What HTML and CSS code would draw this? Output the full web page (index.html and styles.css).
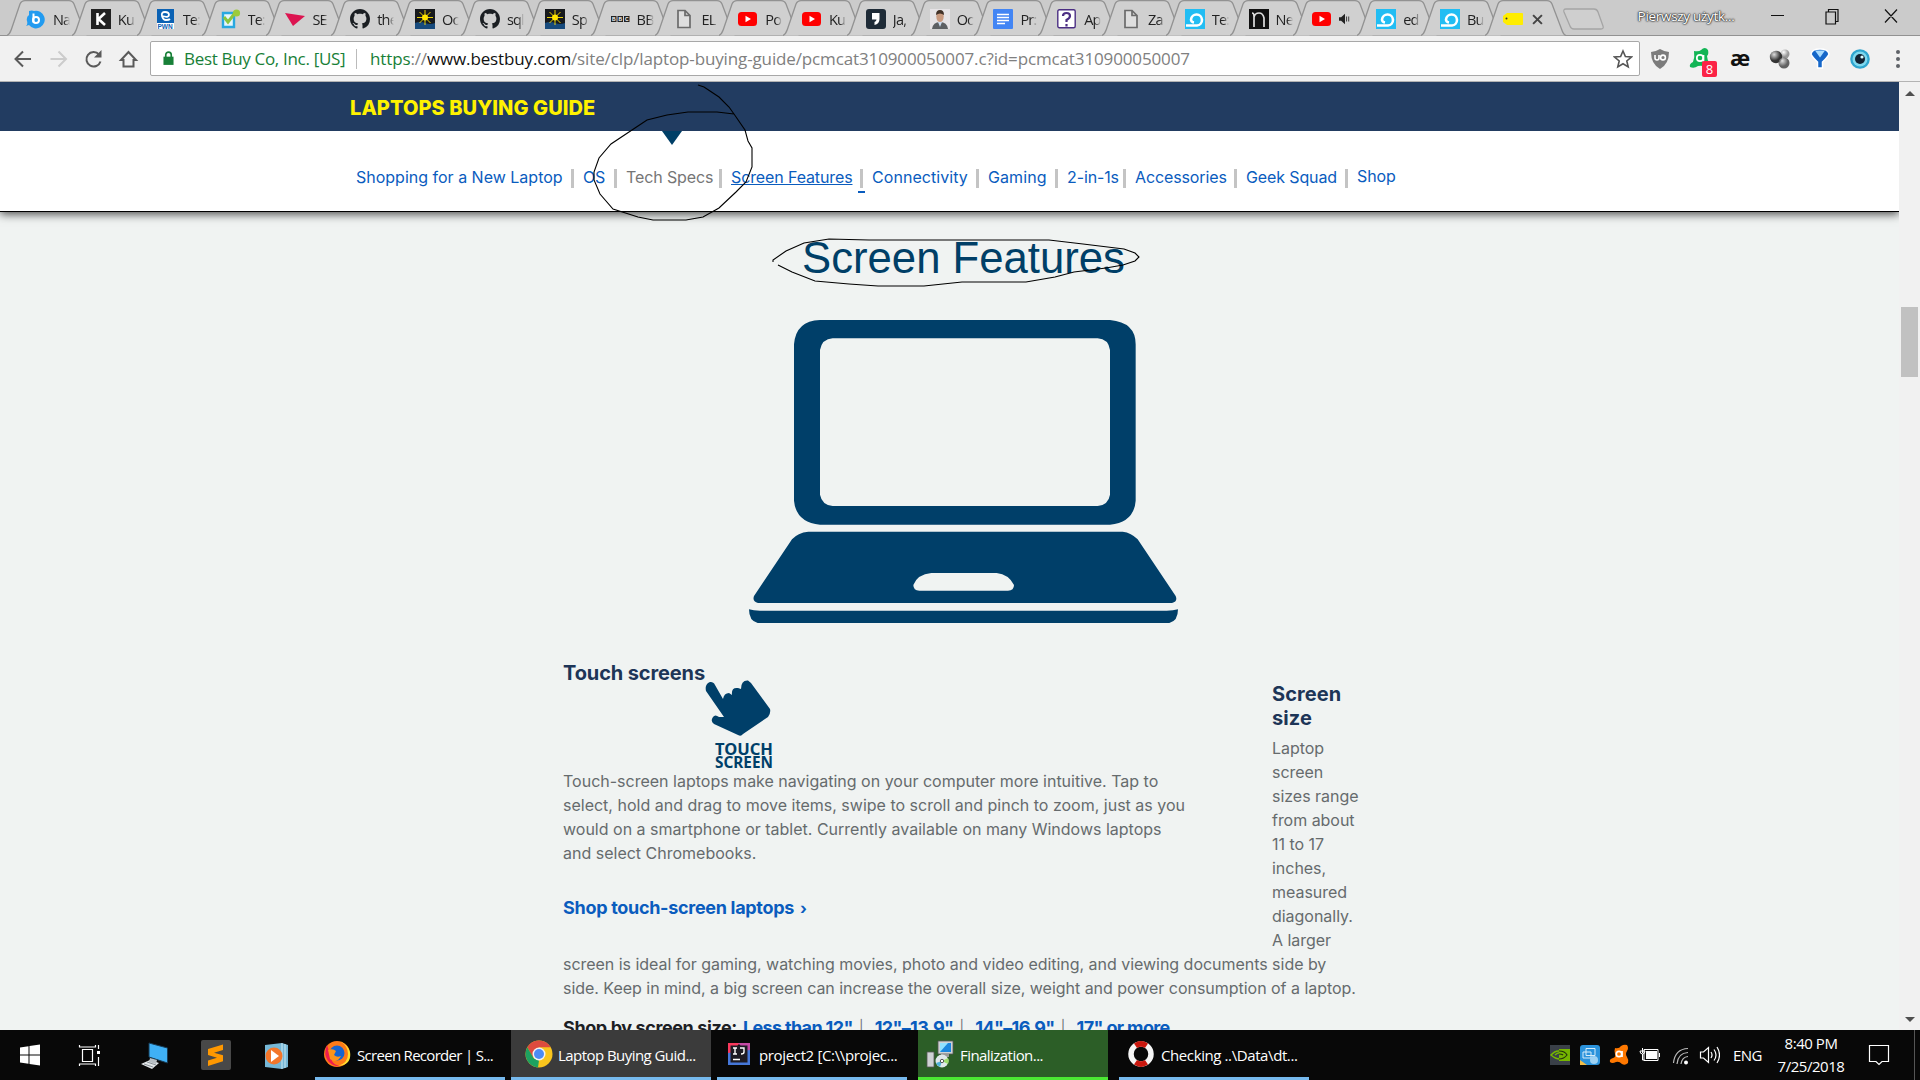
FILE: index.html
```html
<!DOCTYPE html>
<html lang="en">
<head>
<meta charset="utf-8">
<title>Laptop Buying Guide</title>
<link rel="stylesheet" href="styles.css">
</head>
<body>
<svg class="defs" width="0" height="0">
  <defs>
    <symbol id="tab" viewBox="0 0 81 36"><path class="tab-shape" d="M0 35.5C3 34 3.500 32 4.500 29L13 4Q14.500 .7 18 .7H62Q65.500 .7 67 4L76.500 29C77.500 32 78.500 35 81 35.500"/></symbol>
    <symbol id="file" viewBox="0 0 20 20"><path d="M4 1.500h7l5 5v12H4zM11 1.500v5h5" fill="#dedede" stroke="#6b6b6b" stroke-width="1.700"/></symbol>
    <symbol id="youtube" viewBox="0 0 20 20"><rect x="0" y="3" width="19" height="14" rx="3.500" fill="#f00"/><path d="M7.500 6.800v6.400l5.500-3.200z" fill="#fff"/></symbol>
    <symbol id="github" viewBox="0 0 20 20"><path fill="#1b1f23" fill-rule="evenodd" transform="scale(1.25)" d="M8 0C3.580 0 0 3.580 0 8c0 3.540 2.290 6.530 5.470 7.590.4.070.55-.17.55-.38 0-.19-.01-.82-.01-1.490-2.010.37-2.530-.49-2.690-.94-.09-.23-.48-.94-.82-1.130-.28-.15-.68-.52-.01-.53.63-.01 1.080.58 1.230.82.72 1.210 1.870.87 2.330.66.070-.52.28-.87.51-1.070-1.780-.2-3.640-.89-3.640-3.950 0-.87.31-1.590.82-2.150-.08-.2-.36-1.020.08-2.120 0 0 .67-.21 2.200.82.64-.18 1.320-.27 2-.27s1.360.09 2 .27c1.530-1.040 2.200-.82 2.200-.82.44 1.100.16 1.920.08 2.120.51.56.82 1.270.82 2.150 0 3.070-1.870 3.750-3.650 3.950.29.25.54.73.54 1.480 0 1.070-.01 1.930-.01 2.200 0 .21.15.46.55.38A8.010 8.010 0 0 0 16 8c0-4.420-3.580-8-8-8z"/></symbol>
    <symbol id="sun" viewBox="0 0 20 20"><path fill="#16191c" d="M0 0h20v20H0z"/><path fill="#174a7c" d="M0 14q5-2 10 0t10 0v6H0z"/><path stroke="#ffe400" stroke-width=".9" d="M10 1v15M2 8.500h16M4.500 3l11 11M15.500 3l-11 11"/><circle cx="10" cy="8.500" r="3" fill="#ffe400"/></symbol>
    <symbol id="loop" viewBox="0 0 20 20"><path fill="#22bdf3" d="M0 0h20v20H0z"/><path d="M1 16.500h11a5.500 5.500 0 1 0-6-6q0 2.500 3 3" fill="none" stroke="#fff" stroke-width="2.600"/></symbol>
  </defs>
</svg>

<header class="browser">
  <div class="tabstrip">
    <div class="tab"><svg class="shape"><use href="#tab"/></svg><svg class="fav" viewBox="0 0 20 20"><path d="M3 2q3-1 5 0a8.800 8.800 0 1 1-5 14l-3 1q2-2 1-5Q0 8 3 6z" fill="#229bf0"/><path d="M7.500 4.500v9" stroke="#fff" stroke-width="2"/><circle cx="10" cy="11" r="3" fill="none" stroke="#fff" stroke-width="2"/></svg><span class="tt">Na</span></div>
    <div class="tab"><svg class="shape"><use href="#tab"/></svg><svg class="fav" viewBox="0 0 20 20"><path fill="#222" d="M0 0h20v20H0z"/><path d="M6.500 4v12M14 4l-6.500 6 6.500 6" fill="none" stroke="#fff" stroke-width="2.600"/></svg><span class="tt">Ku</span></div>
    <div class="tab"><svg class="shape"><use href="#tab"/></svg><svg class="fav" viewBox="0 0 20 20"><path fill="#0b62b4" d="M1 0h17v14H1z"/><path fill="#fff" d="M1 14h17v6H1z"/><path d="M6 7q7 2 7-1T9 3 6 7t4 4 4-1" fill="none" stroke="#fff" stroke-width="1.800"/><text x="1.500" y="19.600" class="fav-pwn">PWN</text></svg><span class="tt">Te:</span></div>
    <div class="tab"><svg class="shape"><use href="#tab"/></svg><svg class="fav" viewBox="0 0 20 20"><path d="M2 4h11v14H2z" fill="#e5f6fd" stroke="#28a8e0" stroke-width="2.400"/><path d="m3 8 4 5 7-9" fill="none" stroke="#8bc53f" stroke-width="3"/><circle cx="15.500" cy="4" r="3.600" fill="#9ccb3b"/></svg><span class="tt">Te:</span></div>
    <div class="tab"><svg class="shape"><use href="#tab"/></svg><svg class="fav" viewBox="0 0 20 20"><path d="m0 4 20 3L8 17z" fill="#dc1450"/></svg><span class="tt">SE</span></div>
    <div class="tab"><svg class="shape"><use href="#tab"/></svg><svg class="fav"><use href="#github"/></svg><span class="tt">the</span></div>
    <div class="tab"><svg class="shape"><use href="#tab"/></svg><svg class="fav"><use href="#sun"/></svg><span class="tt">Oc</span></div>
    <div class="tab"><svg class="shape"><use href="#tab"/></svg><svg class="fav"><use href="#github"/></svg><span class="tt">sql</span></div>
    <div class="tab"><svg class="shape"><use href="#tab"/></svg><svg class="fav"><use href="#sun"/></svg><span class="tt">Sp</span></div>
    <div class="tab"><svg class="shape"><use href="#tab"/></svg><svg class="fav" viewBox="0 0 20 20"><path fill="#222" d="M1 7h5.500v6H1zM7.500 7H13v6H7.500zM14 7h5.500v6H14z"/><text x="2" y="12" class="fav-bbc">B</text><text x="8.500" y="12" class="fav-bbc">B</text><text x="15" y="12" class="fav-bbc">C</text></svg><span class="tt">BB</span></div>
    <div class="tab slim"><svg class="shape"><use href="#tab"/></svg><svg class="fav"><use href="#file"/></svg><span class="tt">EL</span></div>
    <div class="tab slim"><svg class="shape"><use href="#tab"/></svg><svg class="fav"><use href="#youtube"/></svg><span class="tt">Po</span></div>
    <div class="tab slim"><svg class="shape"><use href="#tab"/></svg><svg class="fav"><use href="#youtube"/></svg><span class="tt">Ku</span></div>
    <div class="tab slim"><svg class="shape"><use href="#tab"/></svg><svg class="fav" viewBox="0 0 20 20"><rect width="20" height="20" rx="3" fill="#1e2b37"/><path d="M6 4h7.500v6q0 5-5 6v-3q2-.7 2-2.500H6z" fill="#fff"/></svg><span class="tt">Ja,</span></div>
    <div class="tab slim"><svg class="shape"><use href="#tab"/></svg><svg class="fav" viewBox="0 0 20 20"><path fill="#e6e3e6" d="M0 0h20v20H0z"/><path fill="#5d6064" d="M2 20q1-7 8-7t8 7z"/><ellipse cx="10" cy="7.500" rx="3.700" ry="5.500" fill="#c99a80"/><path d="M6 6q0-5 4-5t4 5q-4-3-8 0" fill="#423128"/><path d="m8 13 2 5 2-5z" fill="#cddcf0"/></svg><span class="tt">Oc</span></div>
    <div class="tab slim"><svg class="shape"><use href="#tab"/></svg><svg class="fav" viewBox="0 0 20 20"><rect width="20" height="20" rx="1" fill="#4285f4"/><path d="M4 5.500h12M4 8.500h12M4 11.500h12M4 14.500h8" stroke="#fff" stroke-width="1.500"/></svg><span class="tt">Pr:</span></div>
    <div class="tab slim"><svg class="shape"><use href="#tab"/></svg><svg class="fav" viewBox="0 0 20 20"><rect x=".8" y=".8" width="17.400" height="18" rx="1.500" fill="#fff" stroke="#4b2e83" stroke-width="1.400"/><path d="M6 7q0-3 3.500-3T13 7q0 2-3.500 4v2M9.500 15v2.500" fill="none" stroke="#4b2e83" stroke-width="2.200"/></svg><span class="tt">Ap</span></div>
    <div class="tab slim"><svg class="shape"><use href="#tab"/></svg><svg class="fav"><use href="#file"/></svg><span class="tt">Za</span></div>
    <div class="tab slim"><svg class="shape"><use href="#tab"/></svg><svg class="fav"><use href="#loop"/></svg><span class="tt">Te:</span></div>
    <div class="tab slim"><svg class="shape"><use href="#tab"/></svg><svg class="fav" viewBox="0 0 20 20"><path fill="#111" d="M0 0h20v20H0z"/><path d="M3 4q2 0 2 3v11M5 8q1-4 5-4t5 5v9" fill="none" stroke="#ddd" stroke-width="1.700"/></svg><span class="tt">Ne</span></div>
    <div class="tab slim"><svg class="shape"><use href="#tab"/></svg><svg class="fav"><use href="#youtube"/></svg><svg class="speaker" viewBox="0 0 14 14"><path d="M0 5h2.500L7 1v12L2.500 9H0z" fill="#222"/><path d="M8.800 4v6M11.300 4v6" stroke="#444" stroke-width="1.200"/></svg></div>
    <div class="tab slim"><svg class="shape"><use href="#tab"/></svg><svg class="fav"><use href="#loop"/></svg><span class="tt">ed</span></div>
    <div class="tab slim"><svg class="shape"><use href="#tab"/></svg><svg class="fav"><use href="#loop"/></svg><span class="tt">Bu</span></div>
    <div class="tab slim active"><svg class="shape"><use href="#tab"/></svg><svg class="fav" viewBox="0 0 20 20"><path d="M4 4h15q1 0 1 1v10q0 1-1 1H4l-4-3V7z" fill="#ffed00"/><circle cx="3.500" cy="9.500" r="1" fill="#333"/></svg><svg class="close-tab" viewBox="0 0 10 10"><path d="m1 1 8 8M9 1 1 9" stroke="#444" stroke-width="1.800"/></svg></div>
    <svg class="newtab" viewBox="0 0 44 22"><path d="M4 1h28q3 0 4 3l5 14q1 3-2 3H12q-3 0-4-3L2 4Q1 1 4 1z" fill="#cfcfcf" stroke="#a5a5a5" stroke-width="1.300"/></svg>
    <span class="profile">Pierwszy użytk...</span>
    <svg class="winbtns" viewBox="0 0 130 20"><path d="M1 9.500h13M56 6h9.500v12H56zM58.500 6V3.500H68v12h-2.500M115 3.500l12 13M127 3.500l-12 13" fill="none" stroke="#111" stroke-width="1.200"/></svg>
  </div>
  <div class="toolbar">
    <svg class="navicons" viewBox="0 0 136 24"><g fill="none" stroke="#5a5a5a" stroke-width="2"><path d="M24 12H9M16 4.500 8.500 12l7.500 7.500"/><path stroke="#ccc" d="M43.500 12h15M51.500 4.500 59 12l-7.500 7.500"/><path d="M92 7.500a7.200 7.200 0 1 0 1.500 7"/><path d="M114 13l7.500-8 7.500 8h-2.500v6.500h-10V13z"/></g><path d="M94.500 3v7.500H87z" fill="#5a5a5a"/></svg>
    <div class="omnibox">
      <svg class="lock" viewBox="0 0 12 16"><path d="M.5 6h11v9H.5z" fill="#188038"/><path d="M3 7V4a3 3 0 0 1 6 0v3" fill="none" stroke="#188038" stroke-width="1.800"/></svg>
      <span class="cert">Best Buy Co, Inc. [US]</span>
      <span class="url"><i>https</i>://<b>www.bestbuy.com</b>/site/clp/laptop-buying-guide/pcmcat310900050007.c?id=pcmcat310900050007</span>
      <svg class="star" viewBox="0 0 20 20"><path d="m10 2 2.400 5.500 6 .5-4.600 4 1.400 5.900-5.200-3.100-5.200 3.100L6.200 12 1.600 8l6-.5z" fill="none" stroke="#555" stroke-width="1.600"/></svg>
    </div>
    <svg class="exts" viewBox="0 0 270 36">
      <defs><radialGradient id="ball" cx=".35" cy=".3"><stop stop-color="#ddd"/><stop offset="1" stop-color="#333"/></radialGradient><radialGradient id="ball2" cx=".35" cy=".3"><stop stop-color="#fff"/><stop offset="1" stop-color="#999"/></radialGradient></defs>
      <path d="M20 8q5 3 9 3 0 12-9 17-9-5-9-17 4 0 9-3z" fill="#7c7c7c"/><path d="M15 14v3q0 2 2 2t2-2v-3" fill="none" stroke="#fff" stroke-width="1.600"/><circle cx="23" cy="16.500" r="2.400" fill="none" stroke="#fff" stroke-width="1.600"/>
      <path d="M54 10q5 1 7-1 4-4 7 0 1 4-1 6 0 4 3 8l-4 3q-4-2-8-1-4 3-8 1-1-3 3-5 2-5 1-11z" fill="#12b555"/><circle cx="60" cy="17" r="3.200" fill="none" stroke="#fff" stroke-width="1.700"/><path d="M63.500 14v7" stroke="#fff" stroke-width="1.700"/>
      <rect x="62" y="20" width="15" height="16" rx="2" fill="#fb2346"/><text x="65.700" y="33" class="badge8">8</text>
      <text x="90" y="25" class="ae">æ</text>
      <circle cx="145" cy="13" r="4.500" fill="url(#ball2)"/><circle cx="136" cy="16" r="6.200" fill="url(#ball)"/><circle cx="144" cy="22" r="5.500" fill="url(#ball)" opacity=".75"/>
      <path d="M171 13q1-5 9-5t9 5q-1 3-6.500 8v6h-5v-6q-5.500-5-6.500-8z" fill="#1667c9" stroke="#fff" stroke-width="1.500"/><path d="m175 9.500 5 7 5-7z" fill="#a9dcff"/>
      <circle cx="220" cy="18" r="9.800" fill="#2ea5cf"/><circle cx="220" cy="18" r="7.500" fill="#7fd8ee"/><circle cx="220" cy="18" r="5" fill="#123"/><circle cx="222" cy="16" r="1.600" fill="#dff"/>
      <g fill="#5f6368"><circle cx="258" cy="11" r="2"/><circle cx="258" cy="18" r="2"/><circle cx="258" cy="25" r="2"/></g>
    </svg>
  </div>
</header>

<div class="viewport">
  <div class="page">
    <div class="banner"><span>LAPTOPS BUYING GUIDE</span></div>
    <nav class="guide-nav">
      <a class="n1">Shopping for a New Laptop</a><a class="n2">OS</a><a class="n3 muted">Tech Specs</a><a class="n4 current">Screen Features</a><a class="n5">Connectivity</a><a class="n6">Gaming</a><a class="n7">2-in-1s</a><a class="n8">Accessories</a><a class="n9">Geek Squad</a><a class="n10">Shop</a>
    </nav>
    <main>
      <h1>Screen Features</h1>
      <svg class="laptop" viewBox="0 0 1440 1020"><g fill="#003f69">
        <path fill-rule="evenodd" d="M300 60H1170Q1247 67 1247 133V602Q1242 667 1170 674H300Q228 667 222 602V133Q228 62 300 60zM338 115Q306 117 300 150V584Q306 615 338 618H1133Q1165 615 1170 584V150Q1165 117 1133 115z"/>
        <path fill-rule="evenodd" d="M265 695H1208Q1234 698 1253 718L1367 888Q1374 904 1356 909H114Q96 904 102 888L216 718Q233 698 265 695zM634 819Q592 823 580 855Q580 872 598 872H864Q882 872 882 855Q866 823 830 819z"/>
        <path d="M87 928Q100 932 120 932H1340Q1360 932 1374 928Q1374 963 1348 969H113Q87 963 87 928z"/></g></svg>
      <div class="columns">
        <section class="touch">
          <div class="touch-head">
            <h2>Touch screens</h2>
            <svg class="hand" viewBox="0 0 70 90"><path d="M1 11C-1 3 7 -1 10 5L18 19Q19 13 24 13L27 15Q26 7 33 8L36 9Q36 0 43 .5L46 3 65 29Q66 33 63 37L38 54Q36 57 33 55L9 44Q5 41 8 37 10 34 14 37L19 37z" fill="#003f69"/><text x="10" y="74.500" textLength="58" lengthAdjust="spacingAndGlyphs">TOUCH</text><text x="10" y="88" textLength="58" lengthAdjust="spacingAndGlyphs">SCREEN</text></svg>
          </div>
          <p>Touch-screen laptops make navigating on your computer more intuitive. Tap to<br>select, hold and drag to move items, swipe to scroll and pinch to zoom, just as you<br>would on a smartphone or tablet. Currently available on many Windows laptops<br>and select Chromebooks.</p>
          <a class="shop">Shop touch-screen laptops <small>›</small></a>
        </section>
        <section class="size">
          <h2>Screen<br>size</h2>
          <p>Laptop<br>screen<br>sizes range<br>from about<br>11 to 17<br>inches,<br>measured<br>diagonally.<br>A larger</p>
        </section>
      </div>
      <p class="wide">screen is ideal for gaming, watching movies, photo and video editing, and viewing documents side by<br>side. Keep in mind, a big screen can increase the overall size, weight and power consumption of a laptop.</p>
      <div class="sizes"><strong>Shop by screen size:</strong><a>Less than 12"</a><i>|</i><a>12"–13.9"</a><i>|</i><a>14"–16.9"</a><i>|</i><a>17" or more</a></div>
    </main>
  </div>
  <div class="scrollbar"><svg viewBox="0 0 10 5"><path d="M0 5 5 0l5 5z"/></svg><div class="thumb"></div><svg class="down" viewBox="0 0 10 5"><path d="M0 0h10L5 5z"/></svg></div>
</div>

<footer class="taskbar">
  <svg class="pinned" viewBox="0 0 300 50">
    <path fill="#fff" d="M20 17.500l8.500-1.300v8.300H20zM29.500 16 40 14.500v10H29.500zM20 25.500h8.500v8.300L20 32.500zM29.500 25.500H40v10L29.500 34z"/>
    <path d="M82.500 19.500h10v12h-10zM79.500 15v2h16v-2M79.500 36v-2h16v2M98.500 15v4M98.500 27v9" fill="none" stroke="#fff" stroke-width="1.200"/><path fill="#fff" d="M97 21h3v3h-3z"/>
    <path d="m149 13 18.500 5v15L149 27z" fill="#3fb0f5" stroke="#173b55"/><path d="m141 34 9-4 9 3-7 6z" fill="#e2e6e8"/><path d="m150 28 7 2-1 4-7-2z" fill="#b9c0c4"/><path d="m144 34 9 3M147 32l9 3" stroke="#8a9298"/>
    <rect x="201" y="10" width="30" height="30" rx="2" fill="#484848"/><path d="m208 19 15-4.500v5.500l-9 2.800 9 2.500v6L208 36v-5.500l9-2.700-9-2.800z" fill="#ff9800"/>
    <path d="m265 15 17-2 6 2v22l-6 2-17-2z" fill="#75b7d6"/><path d="M282 13v26M285 14v24" stroke="#cce8f3"/><circle cx="274" cy="26" r="8.500" fill="#f3762a"/><path d="M271 20v12l8-6z" fill="#fff"/>
  </svg>
  <div class="task t1"><svg viewBox="0 0 28 28"><circle cx="14" cy="14" r="13" fill="#ff7a18"/><path d="M4 5Q0 14 5 21q5 6 12 5-6-1-8-5z" fill="#ee1c4e"/><path d="M17 1q8 5 8 13 0 9-10 12 14-1 12-14-2-7-10-11z" fill="#ffdf30"/><circle cx="14" cy="13" r="7.500" fill="#1764d0"/><path d="M5 10q5-2 8 1l-2 4q3 3 7 1-4 8-11 3z" fill="#ff9418"/></svg><span>Screen Recorder | S...</span></div>
  <div class="task t2 on"><svg viewBox="0 0 28 28"><circle cx="14" cy="14" r="13.500" fill="#f9c51d"/><path d="M2.300 7.300A13.500 13.500 0 0 1 25.700 7.300H14L8 17.500z" fill="#dd4b3e"/><path d="M2.300 7.300 8.500 18 14 20.500 13 27.500A13.500 13.500 0 0 1 2.300 7.300z" fill="#1da160"/><circle cx="14" cy="14" r="6.500" fill="#f3f3f3"/><circle cx="14" cy="14" r="5" fill="#4c8bf5"/></svg><span>Laptop Buying Guid...</span></div>
  <div class="task t3"><svg viewBox="0 0 28 28"><path d="M3 3h12L3 16z" fill="#f9385c"/><path d="M13 3h12v13z" fill="#c64aa5"/><path d="M3 13v12h22V10z" fill="#4577d9"/><path fill="#1d1b24" d="M5.500 5.500h17v17h-17z"/><path d="M8 8h4M10 8v6M8 14h4M15 8h4v4q0 2-3 2" fill="none" stroke="#fff" stroke-width="1.400"/><path d="M8 19.500h7" stroke="#fff" stroke-width="1.500"/></svg><span>project2 [C:\\projec...</span></div>
  <div class="task t4 green"><svg viewBox="0 0 28 28"><path fill="#cfd2d4" stroke="#555" stroke-width=".8" d="M1 12h7v15H1zM12 1h15v13H12z"/><path fill="#1b87de" d="M14 3h11v9H14z"/><path fill="#8fe1ff" d="m14 12 8-9h-8z"/><path d="M15 14h8v3h-8z" fill="#999"/><circle cx="16" cy="21" r="6.500" fill="#e0e8ea"/><path d="m16 21 6-3a6.500 6.500 0 0 1 0 6z" fill="#9cdd6b"/><path d="m16 21-6 2a6.500 6.500 0 0 0 4 4z" fill="#4db2d8"/><circle cx="16" cy="21" r="1.700" fill="#fff" stroke="#555"/></svg><span>Finalization...</span></div>
  <div class="task t5"><svg viewBox="0 0 28 28"><circle cx="14" cy="14" r="10" fill="none" stroke="#f5f5f5" stroke-width="5.500"/><g fill="none" stroke="#c9170e" stroke-width="5.500"><path d="M8.500 5.700a10 10 0 0 1 11 0M8.500 22.300a10 10 0 0 0 11 0"/></g></svg><span>Checking ..\Data\dt...</span></div>
  <svg class="tray" viewBox="0 0 180 50">
    <path fill="#3a4048" d="M10 15h20v20H10z"/><path fill="#75b500" d="M19 19h11v12H19z"/><path d="M11 25q6-7 14-2l3 2q-8 8-17 0zM15 25q4-4 8-1-1 4-4 3" fill="none" stroke="#76b900" stroke-width="1.500"/><path d="M19 21q6 0 8 4-3 4-8 4M19 24q3 0 4 1" fill="none" stroke="#23300d" stroke-width="1.200"/>
    <rect x="40" y="15" width="20" height="20" rx="3" fill="#2b93dc"/><path d="M43 22h8v6h-8zM46 18.500h9v7h-9z" fill="none" stroke="#d5ecfa"/><circle cx="54" cy="30" r="4" fill="#9fd2f3"/><path d="M40 30v5h7z" fill="#f3be49"/>
    <path d="M75 18q4 1 6-2 3-2 6-1 2 3 0 6-2 3 0 6 2 3 1 6-3 3-6 1-3-3-6-2-4 2-6 0-1-3 3-4 3-1 2-4-1-3 0-6z" fill="#ff7800"/><circle cx="79" cy="24" r="2.700" fill="none" stroke="#fff" stroke-width="1.700"/><path d="M82 21v6" stroke="#fff" stroke-width="1.700"/>
    <path fill="#fff" d="M106 21h11v8h-11z"/><path d="M104 19.500h14v11h-14zM119.500 23v4M102.500 18v5M100 21h5q0 3-2.500 3T100 21zM102.500 24v6h2" fill="none" stroke="#fff"/>
    <g fill="none" stroke="#bbb" stroke-width="1.200"><path d="M133.500 33Q135 19 148 18.500M137 34q1-11 11-11.500M141 34q1-7 7-7.500"/></g><circle cx="146" cy="32.500" r="2" fill="#fff"/>
    <path d="M160.500 22h3l5-4.500v15l-5-4.500h-3zM171 22q2 3 0 6M174 19.500q4 5.500 0 11M177 17q5 8 0 16" fill="none" stroke="#fff" stroke-width="1.200"/>
  </svg>
  <span class="lang">ENG</span>
  <div class="clock"><span>8:40 PM</span><span>7/25/2018</span></div>
  <svg class="notif" viewBox="0 0 22 22"><path d="M1.500 1.500h19v16h-6.500l-3 3-3-3H1.500z" fill="none" stroke="#fff" stroke-width="1.200"/></svg>
</footer>

<svg class="ink" viewBox="0 0 1920 1080">
  <path class="pointer" d="M662 131h20l-10 14z"/>
  <path d="M698 85l6 2 15 10 10 10 5 7 11 16 3 11 4 7v19l-6 15-10 10-17 16-16 9-17 3h-33l-15-3-25-8-13-15-6-14v-8l5-14 12-14 24-16 12-8 20-5 21-3h29l17 2"/>
  <path d="M773 262v-2l13-9 18-8 25-4 40 1h180l34 4 41 5 11 4 4 4-4 4-12 4-17 3-32 4-19 5-29 5h-64l-38 4h-46l-29-2-34-3-23-9-14-7"/>
</svg>
</body>
</html>
```
FILE: styles.css
```css
* { box-sizing: border-box; }
body { margin: 0; width: 1920px; height: 1080px; overflow: hidden; display: flex; flex-direction: column; font-family: "Open Sans", sans-serif; position: relative; }
.defs { position: absolute; }
i, b { font-style: normal; font-weight: inherit; }
h1, h2, p { margin: 0; }

/* browser chrome */
.browser { height: 82px; flex: none; background: #f1f1f1; border-bottom: 1px solid #b3b3b3; }
.tabstrip { height: 36px; display: flex; padding-left: 7px; background: #cbcbcb; border-bottom: 1px solid #929292; position: relative; }
.tab { width: 64.85px; height: 36px; flex: none; position: relative; display: flex; align-items: center; padding: 2px 0 0 19px; }
.tab.slim { width: 63.8px; }
.shape { position: absolute; left: 0; top: 0; width: 81px; height: 36px; }
.tab-shape { fill: #d0d0d0; stroke: #929292; stroke-width: 1.3; }
.active { z-index: 2; }
.active .tab-shape { fill: #f1f1f1; }
.fav { width: 20px; height: 20px; flex: none; position: relative; }
.active .fav { left: -1px; }
.fav-pwn { font: bold 6.5px "Liberation Sans", sans-serif; fill: #0b62b4; }
.fav-bbc { font: bold 5px "Liberation Sans", sans-serif; fill: #fff; }
.tt { position: relative; margin-left: 7px; width: 17px; overflow: hidden; white-space: nowrap; font-size: 14.5px; letter-spacing: -.8px; color: #222; -webkit-mask-image: linear-gradient(90deg, #000 65%, transparent); mask-image: linear-gradient(90deg, #000 65%, transparent); }
.speaker { position: relative; width: 14px; height: 12px; margin-left: 6px; }
.close-tab { position: relative; width: 11px; height: 11px; margin-left: 8px; }
.newtab { width: 44px; height: 22px; margin: 8px 0 0 13px; flex: none; }
.profile { margin: 6px 0 0 32px; width: 104px; white-space: nowrap; font-size: 13.5px; line-height: 20px; letter-spacing: -.3px; color: #fff; text-shadow: 0 0 2px #222, 0 0 2px #222, 0 0 1px #222; }
.winbtns { width: 130px; height: 20px; margin: 6px 0 0 28px; flex: none; }
.toolbar { height: 45px; display: flex; align-items: center; }
.navicons { width: 136px; height: 24px; margin-left: 7px; flex: none; }
.omnibox { width: 1490px; height: 35px; margin-left: 7px; display: flex; align-items: center; padding: 0 6px 0 12px; background: #fff; border: 1px solid #a8a8a8; border-radius: 2px; font-size: 17px; white-space: nowrap; }
.lock { width: 11px; height: 15px; }
.cert { color: #188038; width: 173px; margin-left: 10px; border-right: 1px solid #bbb; line-height: 20px; letter-spacing: -.32px; }
.url { margin-left: 13px; color: #808080; letter-spacing: -.13px; }
.url i { color: #188038; }
.url b { color: #111; }
.star { width: 20px; height: 20px; margin-left: auto; }
.exts { width: 270px; height: 36px; flex: none; }
.badge8 { font: 13px "Open Sans", sans-serif; fill: #fff; }
.ae { font: bold 22px "Open Sans", sans-serif; fill: #111; }

/* web page */
.viewport { height: 948px; flex: none; display: flex; }
.page { width: 1899px; height: 948px; overflow: hidden; background: #f0f3f2; font-family: Inter, sans-serif; font-size: 16px; }
.banner { height: 49px; background: #223c61; color: #fff200; font-weight: 800; font-size: 20px; line-height: 52px; padding-left: 350px; letter-spacing: .07px; position: relative; z-index: 1; }
.guide-nav { height: 81px; background: #fff; border-bottom: 1px solid #000; box-shadow: 0 2px 9px #000000b8; position: relative; display: flex; padding: 38px 0 0 356px; color: #0a5cbe; white-space: nowrap; line-height: 17px; letter-spacing: -.12px; }
.guide-nav a { height: 19px; position: relative; flex: none; }
.guide-nav a:not(:last-child) { border-right: 3px solid #c4c4c4; margin-right: 9px; }
.n1 { width: 218px; letter-spacing: 0; }
.n2 { width: 34px; }
.guide-nav .n3 { width: 96px; color: #767676; margin-right: 10px; }
.n4 { width: 132px; text-decoration: underline; }
.n5 { width: 107px; letter-spacing: .05px; }
.n6 { width: 70px; letter-spacing: .1px; }
.n7 { width: 59px; }
.n8 { width: 102px; }
.n9 { width: 102px; }
.n10 { margin-top: -1px; }
.n4::after { content: ""; position: absolute; right: -5px; top: 22px; width: 7px; height: 2px; background: #0a5cbe; }
main { padding: 21px 0 0 563px; color: #666b6d; line-height: 24px; white-space: nowrap; }
h1 { margin-left: 239px; font: 43.7px/50px "Liberation Sans", Arial, sans-serif; color: #003f67; }
.laptop { display: block; width: 480px; height: 340px; margin: 17px 0 21px 157px; }
.columns { display: grid; grid-template-columns: 709px 90px; height: 291px; }
h2 { font-size: 20px; line-height: 24px; font-weight: 700; color: #1d3557; letter-spacing: -.12px; }
.touch-head { display: flex; height: 108px; }
.hand { width: 70px; height: 90px; margin: 19px 0 0 1px; overflow: hidden; }
.hand text { font: bold 15.5px "Noto Sans", sans-serif; fill: #003f69; }
.touch h2 { width: 141px; }
.shop { display: block; margin-top: 31px; font-size: 18px; font-weight: 700; color: #0a5cbe; letter-spacing: -.3px; }
.shop small { font-size: 16px; margin-left: 2px; }
.size { padding-top: 21px; }
.size h2 { margin-bottom: 6px; letter-spacing: .1px; }
.size p, .wide { letter-spacing: -.03px; }
.sizes { display: flex; margin-top: 16px; font-size: 18px; letter-spacing: -.65px; }
.sizes strong { color: #1c2024; width: 180px; letter-spacing: -.4px; }
.sizes a { color: #0a5cbe; font-weight: 700; }
.sizes i { margin: 0 9px 0 6px; width: 7px; font-size: 16px; font-weight: 300; }
.scrollbar { width: 21px; background: #f1f1f1; display: flex; flex-direction: column; align-items: center; padding-top: 9px; }
.scrollbar svg { width: 10px; height: 5px; fill: #505050; }
.thumb { width: 17px; height: 70px; margin-top: 211px; background: #c1c1c1; }
.scrollbar .down { margin-top: auto; margin-bottom: 8px; }

/* taskbar */
.taskbar { height: 50px; flex: none; background: #080808; color: #fff; display: flex; font-size: 15px; white-space: nowrap; position: relative; }
.pinned { width: 300px; height: 50px; flex: none; }
.task { width: 190px; height: 50px; flex: none; display: flex; align-items: center; padding-left: 8px; border-bottom: 3px solid #76b9ed; letter-spacing: -.55px; }
.task svg { width: 28px; height: 28px; flex: none; }
.task span { margin-left: 6px; margin-top: 2px; }
.t1 { margin-left: 15px; letter-spacing: -.7px; }
.t2 { margin-left: 6px; width: 200px; padding-left: 14px; }
.t2 span { margin-left: 5px; }
.t3 { margin-left: 6px; letter-spacing: -.35px; }
.t4 { margin-left: 11px; }
.t5 { margin-left: 11px; letter-spacing: -.4px; }
.on { background: #3b3b3b; }
.green { background: #2c5e27; border-color: #4be833; }
.tray { width: 180px; height: 50px; margin-left: 231px; flex: none; }
.lang { width: 32px; margin-left: 13px; line-height: 51px; letter-spacing: -.6px; }
.clock { width: 80px; margin-left: 6px; display: flex; flex-direction: column; align-items: center; line-height: 23px; padding-top: 2px; letter-spacing: -.45px; }
.notif { width: 22px; height: 22px; margin: 14px 0 0 17px; }
.taskbar::after { content: ""; margin-left: auto; margin-right: 5px; width: 1px; background: #555; }

/* pen marks drawn over the page */
.ink { position: absolute; left: 0; top: 0; width: 1920px; height: 1080px; pointer-events: none; z-index: 5; }
.ink path { fill: none; stroke: #000; stroke-width: 1.1; }
.ink .pointer { fill: #003f67; stroke: none; }
```
